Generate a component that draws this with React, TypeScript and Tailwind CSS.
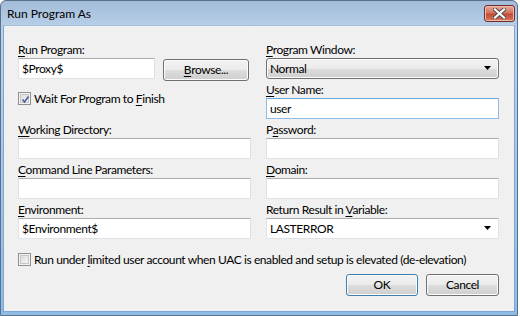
import React from 'react';

// underline the accelerator letter, like a Win32 dialog does
function Acc({ text, at }: { text: string; at: number }) {
    if (at < 0) return <>{text}</>;
    return (
        <>
            {text.slice(0, at)}
            <span className="underline underline-offset-[2px]">{text[at]}</span>
            {text.slice(at + 1)}
        </>
    );
}

function Label({ text, at }: { text: string; at: number }) {
    return (
        <div className="h-[16px] leading-[15px] whitespace-nowrap">
            <Acc text={text} at={at} />
        </div>
    );
}

function TextBox({ value, focused, className = '' }: { value?: string; focused?: boolean; className?: string }) {
    const border = focused
        ? 'border-[#8fbde6] border-t-[#6ca6de]'
        : 'border-[#e0e3e8] border-t-[#abadb3] border-l-[#e2e3ea] border-r-[#dbdfe6]';
    return (
        <div className={`h-[21px] bg-white border ${border} pl-[3px] leading-[19px] whitespace-nowrap ${className}`}>
            {value}
        </div>
    );
}

function Arrow() {
    return (
        <svg width="8" height="5" viewBox="0 0 8 5" className="shrink-0">
            <path d="M0 0H7L3.5 4Z" fill="#000" />
        </svg>
    );
}

const btnFace =
    'bg-[linear-gradient(#f2f2f2,#ebebeb_50%,#dddddd_50%,#cfcfcf)] shadow-[inset_0_0_0_1px_#fcfcfc]';

function Button({ children, def, className = '' }: { children: React.ReactNode; def?: boolean; className?: string }) {
    return (
        <div
            className={`h-[22px] rounded-[3px] border flex items-center justify-center ${btnFace} ${
                def ? 'border-[#3c7fb1] shadow-[inset_0_0_0_1px_#b4dcf5]' : 'border-[#707070]'
            } ${className}`}
        >
            {children}
        </div>
    );
}

function CheckBox({ checked }: { checked?: boolean }) {
    return (
        <div className="w-[13px] h-[13px] border border-[#8e8f8f] bg-[#f4f4f4] p-[1px] shrink-0">
            <div className="w-full h-full border border-[#c6c6c6] bg-[linear-gradient(135deg,#dcdcdc,#f6f6f6)] relative">
                {checked && (
                    <svg width="9" height="9" viewBox="0 0 9 9" className="absolute left-[0px] top-[0px]">
                        <path d="M1.5 4.5L3.5 7L7.5 1.5" stroke="#4a5f97" strokeWidth="1.6" fill="none" />
                    </svg>
                )}
            </div>
        </div>
    );
}

export default function App() {
    return (
        <div className="w-[520px] h-[316px] bg-white font-['Lato','Noto_Sans',sans-serif] text-[12px] text-black">
            <div className="w-[518px] h-[316px] rounded-t-[6px] border border-[#5b7089] bg-[linear-gradient(#a2bcd9,#bcd2ea_30px,#8fbce6)] flex flex-col">
                {/* Title bar */}
                <div className="h-[24px] flex items-start shrink-0">
                    <div className="pl-[6px] pt-[5px] text-[12px] leading-[15px] text-black">Run Program As</div>
                    <div className="ml-auto mr-[2px] mt-[4px] w-[31px] h-[17px] rounded-[3px] border border-[#6f2f26] bg-[linear-gradient(#e9a99b,#d3735f_45%,#c24a35_55%,#d67a5f)] shadow-[inset_0_0_0_1px_#efb9ab] flex items-center justify-center">
                        <svg width="13" height="11" viewBox="0 0 13 11">
                            <path d="M2 1.5L11 9.5M11 1.5L2 9.5" stroke="#4a4a4a" strokeWidth="4" strokeLinecap="square" />
                            <path d="M2 1.5L11 9.5M11 1.5L2 9.5" stroke="#ffffff" strokeWidth="2.2" strokeLinecap="square" />
                        </svg>
                    </div>
                </div>

                {/* Client area */}
                <div className="flex-1 mx-[2px] mb-[3px] bg-[#f0f0f0] border border-[#7aa7d6] border-t-[#a7bfd9] px-[14px] pt-[16px] tracking-[-0.4px]">
                    <div className="grid grid-cols-[233px_233px] gap-x-[15px]">
                        {/* Left column */}
                        <div className="flex flex-col">
                            <div className="h-[40px]">
                                <Label text="Run Program:" at={0} />
                                <div className="flex gap-[8px]">
                                    <TextBox value="$Proxy$" className="w-[137px]" />
                                    <Button className="w-[86px] mt-[1px]">
                                        <Acc text="Browse..." at={0} />
                                    </Button>
                                </div>
                            </div>
                            <div className="h-[40px] pt-[10px] flex items-start gap-[3px]">
                                <CheckBox checked />
                                <span className="leading-[13px]">
                                    <Acc text="Wait For Program to Finish" at={20} />
                                </span>
                            </div>
                            <div className="h-[40px]">
                                <Label text="Working Directory:" at={0} />
                                <TextBox />
                            </div>
                            <div className="h-[40px]">
                                <Label text="Command Line Parameters:" at={0} />
                                <TextBox />
                            </div>
                            <div className="h-[40px]">
                                <Label text="Environment:" at={0} />
                                <TextBox value="$Environment$" />
                            </div>
                        </div>

                        {/* Right column */}
                        <div className="flex flex-col">
                            <div className="h-[40px]">
                                <Label text="Program Window:" at={0} />
                                <div className={`h-[21px] rounded-[3px] border border-[#707070] ${btnFace} flex items-center pl-[3px] pr-[6px]`}>
                                    <span className="flex-1">Normal</span>
                                    <Arrow />
                                </div>
                            </div>
                            <div className="h-[40px]">
                                <Label text="User Name:" at={0} />
                                <TextBox value="user" focused />
                            </div>
                            <div className="h-[40px]">
                                <Label text="Password:" at={1} />
                                <TextBox />
                            </div>
                            <div className="h-[40px]">
                                <Label text="Domain:" at={0} />
                                <TextBox />
                            </div>
                            <div className="h-[40px]">
                                <Label text="Return Result in Variable:" at={17} />
                                <div className="h-[21px] bg-white border border-[#e0e3e8] border-t-[#abadb3] flex items-center pl-[3px] pr-[6px]">
                                    <span className="flex-1">LASTERROR</span>
                                    <Arrow />
                                </div>
                            </div>
                        </div>
                    </div>

                    <div className="mt-[11px] flex items-center gap-[3px] whitespace-nowrap">
                        <CheckBox />
                        <span className="leading-[13px]">
                            <Acc text="Run under limited user account when UAC is enabled and setup is elevated (de-elevation)" at={10} />
                        </span>
                    </div>

                    <div className="mt-[8px] flex justify-end gap-[8px] pr-[1px]">
                        <Button def className="w-[72px]">OK</Button>
                        <Button className="w-[73px]">Cancel</Button>
                    </div>
                </div>
            </div>
        </div>
    );
}
